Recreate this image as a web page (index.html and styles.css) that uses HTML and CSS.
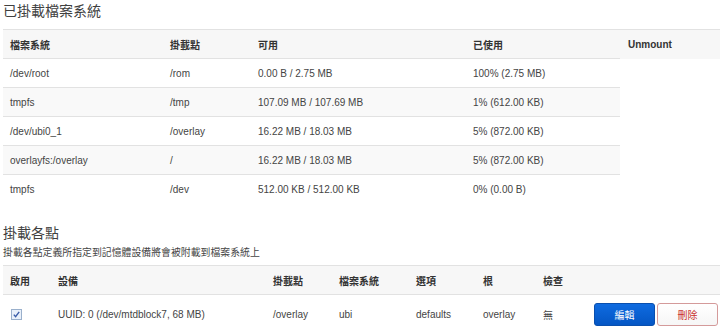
FILE: index.html
```html
<!DOCTYPE html>
<html>
<head>
<meta charset="utf-8">
<link rel="stylesheet" href="styles.css">
</head>
<body>
<div class="page">
  <h2 class="title">已掛載檔案系統</h2>
  <table class="grid mounted">
    <colgroup>
      <col class="c1"><col class="c2"><col class="c3"><col class="c4"><col class="c5">
    </colgroup>
    <thead>
      <tr><th>檔案系統</th><th>掛載點</th><th>可用</th><th>已使用</th><th>Unmount</th></tr>
    </thead>
    <tbody>
      <tr><td>/dev/root</td><td>/rom</td><td>0.00 B / 2.75 MB</td><td>100% (2.75 MB)</td></tr>
      <tr class="alt"><td>tmpfs</td><td>/tmp</td><td>107.09 MB / 107.69 MB</td><td>1% (612.00 KB)</td></tr>
      <tr><td>/dev/ubi0_1</td><td>/overlay</td><td>16.22 MB / 18.03 MB</td><td>5% (872.00 KB)</td></tr>
      <tr class="alt"><td>overlayfs:/overlay</td><td>/</td><td>16.22 MB / 18.03 MB</td><td>5% (872.00 KB)</td></tr>
      <tr><td>tmpfs</td><td>/dev</td><td>512.00 KB / 512.00 KB</td><td>0% (0.00 B)</td></tr>
    </tbody>
  </table>

  <h2 class="title second">掛載各點</h2>
  <p class="desc">掛載各點定義所指定到記憶體設備將會被附載到檔案系統上</p>
  <table class="grid points">
    <colgroup>
      <col class="p1"><col class="p2"><col class="p3"><col class="p4"><col class="p5"><col class="p6"><col class="p7"><col class="p8">
    </colgroup>
    <thead>
      <tr><th>啟用</th><th>設備</th><th>掛載點</th><th>檔案系統</th><th>選項</th><th>根</th><th>檢查</th><th></th></tr>
    </thead>
    <tbody>
      <tr class="tall">
        <td><span class="check"><svg width="11" height="11" viewBox="0 0 11 11"><rect x="0.5" y="0.5" width="10" height="10" fill="#e9f0fa" stroke="#9ab0cc"/><path d="M2.8 5.6 L4.6 7.6 L8.2 2.9" fill="none" stroke="#3a5ca8" stroke-width="1.4"/></svg></span></td>
        <td>UUID: 0 (/dev/mtdblock7, 68 MB)</td>
        <td>/overlay</td>
        <td>ubi</td>
        <td>defaults</td>
        <td>overlay</td>
        <td>無</td>
        <td><div class="actions"><span class="btn edit">編輯</span><span class="btn del">刪除</span></div></td>
      </tr>
    </tbody>
  </table>
</div>
</body>
</html>
```

FILE: styles.css
```css
html, body {
  margin: 0;
  padding: 0;
  background: #fff;
}
body {
  font-family: "Liberation Sans", "Noto Sans CJK TC", sans-serif;
  font-size: 10px;
  color: #444;
}
.page {
  padding-left: 3px;
  width: 717px;
}
.title {
  margin: 0;
  font-family: "Noto Sans CJK TC", sans-serif;
  font-weight: 400;
  font-size: 14px;
  line-height: 20px;
  color: #404040;
}
.title.second {
  margin-top: 19px;
}
.desc {
  margin: 3px 0 0 0;
  font-family: "Noto Sans CJK TC", sans-serif;
  font-size: 9.9px;
  line-height: 14px;
  color: #444;
}
.grid {
  width: 717px;
  border-collapse: collapse;
  table-layout: fixed;
}
.mounted { margin-top: 9px; }
.points { margin-top: 6px; }
.grid th, .grid td {
  height: 28px;
  padding: 0 0 0 7px;
  text-align: left;
  vertical-align: middle;
  white-space: nowrap;
  border-top: 1px solid #e2e2e2;
}
.grid th {
  background: #f7f7f7;
  font-weight: 700;
  color: #333;
}
.grid tr.alt td { background: #f9f9f9; }
.grid tr.tall td { height: 38px; }
.c1 { width: 160px; }
.c2 { width: 88px; }
.c3 { width: 215px; }
.c4 { width: 154px; }
.c5 { width: 100px; }
.mounted th:last-child { padding-left: 8px; }
.p1 { width: 48px; }
.p2 { width: 215px; }
.p3 { width: 66px; }
.p4 { width: 77px; }
.p5 { width: 67px; }
.p6 { width: 60px; }
.p7 { width: 51px; }
.p8 { width: 133px; }
.check {
  display: inline-flex;
  margin-left: 1px;
  margin-top: 2px;
}
.actions {
  display: flex;
  gap: 2px;
}
.btn {
  display: inline-flex;
  align-items: center;
  justify-content: center;
  box-sizing: border-box;
  width: 61px;
  height: 23px;
  border-radius: 3px;
  font-family: "Noto Sans CJK TC", sans-serif;
  font-size: 10px;
}
.btn.edit {
  background: linear-gradient(#0f6be0, #0456c4);
  border: 1px solid #0a4fae;
  color: #fff;
}
.btn.del {
  background: linear-gradient(#ffffff, #f6f6f6);
  border: 1px solid #d49a9a;
  color: #c9302c;
}
```
